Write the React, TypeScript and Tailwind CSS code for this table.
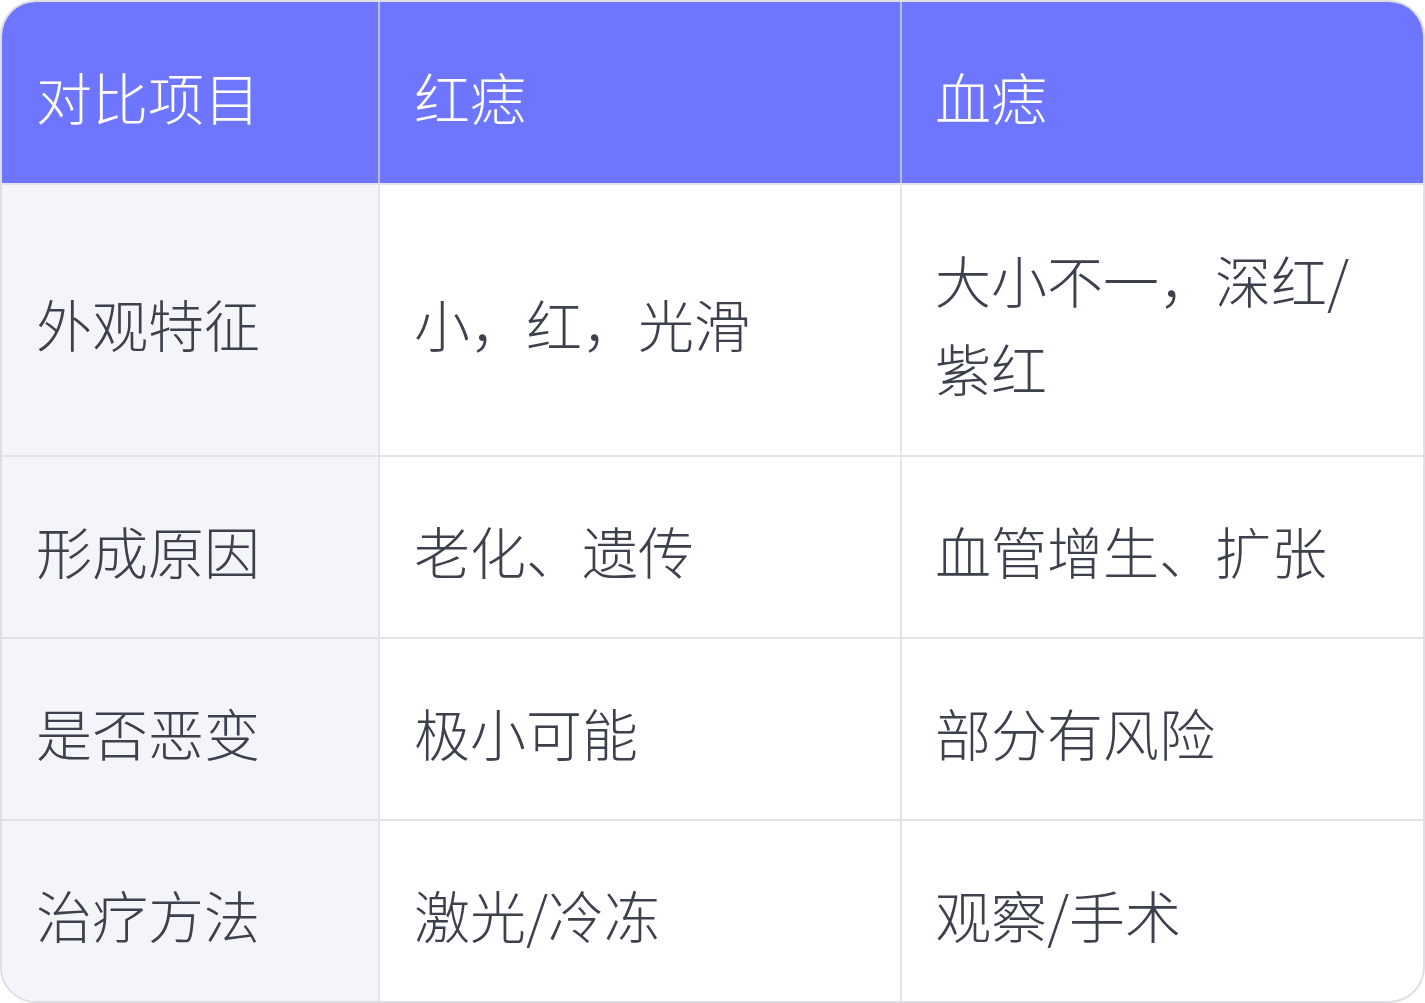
const rows: { label: string; red: string; blood: string; height: string }[] = [
  { label: '外观特征', red: '小，红，光滑', blood: '大小不一，深红/紫红', height: 'h-[272px]' },
  { label: '形成原因', red: '老化、遗传', blood: '血管增生、扩张', height: 'h-[182px]' },
  { label: '是否恶变', red: '极小可能', blood: '部分有风险', height: 'h-[182px]' },
  { label: '治疗方法', red: '激光/冷冻', blood: '观察/手术', height: 'h-[182px]' },
];

const font = { fontFamily: '"Noto Sans CJK SC", "Noto Sans", sans-serif' };

export default function App() {
  return (
    <div className="h-[1003px] w-[1425px] bg-white" style={font}>
      <div className="overflow-hidden rounded-[36px] border-2 border-[#dedee4]">
        <div className="grid h-[181px] grid-cols-[376px_522px_521px] bg-[#6e76ff] text-[56px] font-light leading-[88px] text-white">
          <div className="flex items-center px-[34px] pt-[6px]">对比项目</div>
          <div className="flex items-center border-l-2 border-[#b9bcff] px-[34px] pt-[6px]">红痣</div>
          <div className="flex items-center border-l-2 border-[#b9bcff] px-[33px] pt-[6px]">血痣</div>
        </div>
        {rows.map((row) => (
          <div
            key={row.label}
            className={`grid grid-cols-[376px_522px_521px] border-t-2 border-[#e2e2e8] text-[56px] font-light leading-[88px] text-[#3d414d] ${row.height}`}
          >
            <div className="flex items-center bg-[#f4f5f9] px-[34px] pt-[6px]">{row.label}</div>
            <div className="flex items-center border-l-2 border-[#e2e2e8] px-[34px] pt-[6px]">{row.red}</div>
            <div className="flex items-center border-l-2 border-[#e2e2e8] px-[33px] pt-[6px]">{row.blood}</div>
          </div>
        ))}
      </div>
    </div>
  );
}
